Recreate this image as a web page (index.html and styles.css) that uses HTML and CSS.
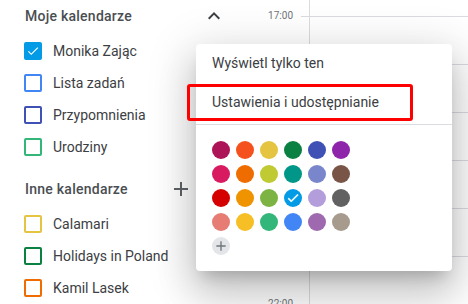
FILE: index.html
```
<!DOCTYPE html>
<html lang="pl">
<head>
<meta charset="utf-8">
<link rel="stylesheet" href="styles.css">
</head>
<body>
<div class="app">
  <aside class="sidebar">
    <div class="section-head first">
      <span class="section-title">Moje kalendarze</span>
      <span class="icon-btn">
        <svg viewBox="0 0 24 24" width="24" height="24"><path d="M12 8l-6 6 1.41 1.41L12 10.83l4.59 4.58L18 14z" fill="#3c4043"/></svg>
      </span>
    </div>
    <ul class="cal-list">
      <li class="cal"><span class="box checked" style="--c:#039be5"><svg viewBox="0 0 24 24" width="16" height="16"><path d="M9 16.17L4.83 12l-1.42 1.41L9 19 21 7l-1.41-1.41z" fill="#fff"/></svg></span>Monika Zając</li>
      <li class="cal"><span class="box" style="--c:#4285f4"></span>Lista zadań</li>
      <li class="cal"><span class="box" style="--c:#3f51b5"></span>Przypomnienia</li>
      <li class="cal"><span class="box" style="--c:#33b679"></span>Urodziny</li>
    </ul>
    <div class="section-head second">
      <span class="section-title">Inne kalendarze</span>
      <span class="icon-btn">
        <svg viewBox="0 0 24 24" width="24" height="24"><path d="M19 13h-6v6h-2v-6H5v-2h6V5h2v6h6v2z" fill="#5f6368"/></svg>
      </span>
      <span class="icon-btn">
        <svg viewBox="0 0 24 24" width="24" height="24"><path d="M12 8l-6 6 1.41 1.41L12 10.83l4.59 4.58L18 14z" fill="#3c4043"/></svg>
      </span>
    </div>
    <ul class="cal-list">
      <li class="cal"><span class="box" style="--c:#e4c441"></span>Calamari</li>
      <li class="cal"><span class="box" style="--c:#0b8043"></span>Holidays in Poland</li>
      <li class="cal"><span class="box" style="--c:#ef6c00"></span>Kamil Lasek</li>
    </ul>
  </aside>

  <main class="grid">
    <div class="row top"><div class="label"></div><div class="tick"></div><div class="day"></div></div>
    <div class="row"><div class="label"><span>17:00</span></div><div class="tick"></div><div class="day"></div></div>
    <div class="row"><div class="label"></div><div class="tick"></div><div class="day"></div></div>
    <div class="row"><div class="label"></div><div class="tick"></div><div class="day"></div></div>
    <div class="row"><div class="label"></div><div class="tick"></div><div class="day"></div></div>
    <div class="row"><div class="label"></div><div class="tick"></div><div class="day"></div></div>
    <div class="row"><div class="label"></div><div class="tick"></div><div class="day"></div></div>
    <div class="row"><div class="label"><span>22:00</span></div><div class="tick"></div><div class="day"></div></div>
  </main>
</div>

<div class="menu">
  <div class="menu-item first">Wyświetl tylko ten</div>
  <div class="menu-item">Ustawienia i udostępnianie</div>
  <div class="divider"></div>
  <div class="palette">
    <span class="dot" style="--c:#ad1457"></span>
    <span class="dot" style="--c:#f4511e"></span>
    <span class="dot" style="--c:#e4c441"></span>
    <span class="dot" style="--c:#0b8043"></span>
    <span class="dot" style="--c:#3f51b5"></span>
    <span class="dot" style="--c:#8e24aa"></span>
    <span class="dot" style="--c:#d81b60"></span>
    <span class="dot" style="--c:#ef6c00"></span>
    <span class="dot" style="--c:#c0ca33"></span>
    <span class="dot" style="--c:#009688"></span>
    <span class="dot" style="--c:#7986cb"></span>
    <span class="dot" style="--c:#795548"></span>
    <span class="dot" style="--c:#d50000"></span>
    <span class="dot" style="--c:#f09300"></span>
    <span class="dot" style="--c:#7cb342"></span>
    <span class="dot" style="--c:#039be5"><svg viewBox="0 0 24 24" width="14" height="14"><path d="M9 16.17L4.83 12l-1.42 1.41L9 19 21 7l-1.41-1.41z" fill="#fff" stroke="#fff" stroke-width="1"/></svg></span>
    <span class="dot" style="--c:#b39ddb"></span>
    <span class="dot" style="--c:#616161"></span>
    <span class="dot" style="--c:#e67c73"></span>
    <span class="dot" style="--c:#f6bf26"></span>
    <span class="dot" style="--c:#33b679"></span>
    <span class="dot" style="--c:#4285f4"></span>
    <span class="dot" style="--c:#9e69af"></span>
    <span class="dot" style="--c:#a79b8e"></span>
    <span class="dot add"><svg viewBox="0 0 24 24" width="16" height="16"><path d="M19 13h-6v6h-2v-6H5v-2h6V5h2v6h6v2z" fill="#70757a"/></svg></span>
  </div>
</div>

<div class="highlight"></div>
</body>
</html>
```

FILE: styles.css
```
* { box-sizing: border-box; }

html, body {
  margin: 0;
  padding: 0;
  background: #fff;
  width: 468px;
  height: 304px;
  overflow: hidden;
  font-family: Roboto, "Liberation Sans", Arial, sans-serif;
  color: #3c4043;
}

.app {
  display: flex;
  height: 304px;
}

/* Sidebar */
.sidebar {
  width: 240px;
  flex: none;
  padding: 0 14px 0 24px;
}

.section-head {
  display: flex;
  align-items: center;
  height: 32px;
  gap: 9px;
}
.section-head.first { margin-bottom: 3px; }
.section-head.second { margin-top: 10px; margin-bottom: 3px; }

.section-title {
  flex: 1;
  font-size: 14px;
  font-weight: 500;
  letter-spacing: 0.25px;
  color: #4a4e52;
  padding-left: 1px;
}

.icon-btn {
  width: 24px;
  height: 24px;
  display: flex;
}

.cal-list {
  list-style: none;
  margin: 0;
  padding: 0;
}

.cal {
  display: flex;
  align-items: center;
  height: 32px;
  font-size: 14px;
  color: #3c4043;
}

.box {
  width: 18px;
  height: 18px;
  border: 2px solid var(--c);
  border-radius: 2px;
  margin-right: 11px;
  flex: none;
  display: flex;
  align-items: center;
  justify-content: center;
}
.box.checked {
  background: var(--c);
}

/* Time grid */
.grid {
  flex: 1;
  display: flex;
  flex-direction: column;
}

.row {
  display: flex;
  height: 48px;
  flex: none;
}
.row.top { height: 16px; }

.label {
  width: 61px;
  flex: none;
  padding-right: 8px;
  text-align: right;
  font-size: 10px;
  line-height: 12px;
  color: #70757a;
}
.label span {
  display: block;
  margin-top: -6px;
}

.tick {
  width: 8px;
  flex: none;
  border-top: 1px solid #dadce0;
}
.row.top .tick { border-top: none; }

.day {
  flex: 1;
  border-left: 1px solid #dadce0;
  border-top: 1px solid #dadce0;
}
.row.top .day { border-top: none; }

/* Menu overlay */
.menu {
  position: absolute;
  left: 196px;
  top: 44px;
  width: 256px;
  height: 227px;
  background: #fff;
  border-radius: 4px;
  box-shadow: 0 24px 38px 3px rgba(0,0,0,.14), 0 9px 46px 8px rgba(0,0,0,.12), 0 11px 15px -7px rgba(0,0,0,.2);
}

.menu-item {
  height: 40px;
  display: flex;
  align-items: center;
  padding-left: 16px;
  font-size: 14px;
  color: #3c4043;
}
.menu-item.first { height: 38px; }

.divider {
  height: 1px;
  background: #dadce0;
  margin-top: 2px;
}

.palette {
  display: grid;
  grid-template-columns: repeat(6, 18px);
  grid-auto-rows: 18px;
  gap: 6px;
  padding: 16px 0 0 16px;
}

.dot {
  width: 18px;
  height: 18px;
  border-radius: 50%;
  background: var(--c);
  display: flex;
  align-items: center;
  justify-content: center;
}
.dot.add {
  background: #e3e5e8;
}

.highlight {
  position: absolute;
  left: 187px;
  top: 84px;
  width: 226px;
  height: 37px;
  border: 3px solid #ff0000;
  border-radius: 3px;
}
```
